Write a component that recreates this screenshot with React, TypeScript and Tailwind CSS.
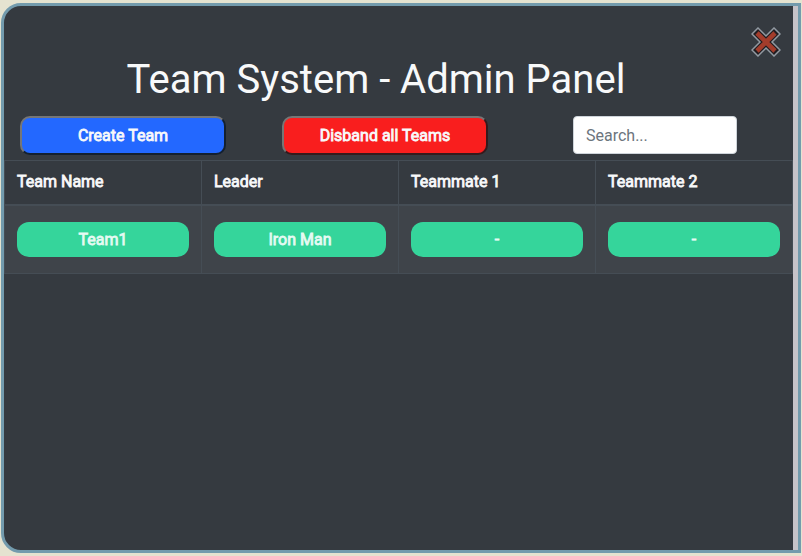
import React, { useState } from 'react';

interface Team {
  name: string;
  leader: string;
  members: string[];
}

const columns = ['Team Name', 'Leader', 'Teammate 1', 'Teammate 2'];

const initialTeams: Team[] = [{ name: 'Team1', leader: 'Iron Man', members: ['-', '-'] }];

// regular weight thickened with a stroke, keeps the widths of the regular face
const heavy = '[-webkit-text-stroke:0.8px_currentColor]';

const CloseIcon = () => (
  <svg viewBox="0 0 30 30" className="w-[30px] h-[30px]" aria-hidden="true">
    <path
      d="M7 1 L15 9 L23 1 L29 7 L21 15 L29 23 L23 29 L15 21 L7 29 L1 23 L9 15 L1 7 Z"
      fill="#211c20"
      stroke="#929aa2"
      strokeWidth="1.5"
    />
    <path d="M6 6 L24 24 M24 6 L6 24" stroke="#a33c2b" strokeWidth="4.6" />
  </svg>
);

interface CellProps {
  text: string;
}

const CellButton: React.FC<CellProps> = ({ text }) => (
  <button className={`block w-full h-[35px] pt-px rounded-xl bg-[#35d59b] text-[#e6faf3] text-center ${heavy}`}>{text}</button>
);

const App: React.FC = () => {
  const [teams, setTeams] = useState<Team[]>(initialTeams);
  const [search, setSearch] = useState('');

  const handleCreate = () => {
    setTeams([...teams, { name: `Team${teams.length + 1}`, leader: '-', members: ['-', '-'] }]);
  };

  const visible = teams.filter(team => team.name.toLowerCase().includes(search.toLowerCase()));

  return (
    <div className="min-h-screen flex bg-[#e5e3d0] px-px py-[3px] font-[Roboto,sans-serif] text-base text-[#f8f9fa]">
      <div className="flex flex-1 overflow-hidden rounded-l-[20px] border-3 border-[#739bad] bg-[#353a40]">
        <div className="flex-1 min-w-0">
          <header className="flex items-start pt-[21px] pr-3">
            <h1 className="flex-1 pt-[29px] pr-[3px] text-center text-[40px] leading-[48px]">Team System - Admin Panel</h1>
            <button aria-label="Close">
              <CloseIcon />
            </button>
          </header>

          <div className="grid grid-cols-3 pt-3 pb-[5px]">
            <div className="pl-4 pr-[41px]">
              <button
                onClick={handleCreate}
                className={`block w-full h-[39px] rounded-[10px] border-2 border-t-[#767676] border-l-[#767676] border-r-[#14202f] border-b-[#14202f] bg-[#2368ff] ${heavy}`}
              >
                Create Team
              </button>
            </div>
            <div className="pl-[15px] pr-[42px]">
              <button
                onClick={() => setTeams([])}
                className={`block w-full h-[39px] rounded-[10px] border-2 border-t-[#767676] border-l-[#767676] border-r-[#351a1c] border-b-[#351a1c] bg-[#f91e1e] ${heavy}`}
              >
                Disband all Teams
              </button>
            </div>
            <div className="pl-[43px] pr-14">
              <input
                type="text"
                aria-label="Search teams"
                placeholder="Search..."
                value={search}
                onChange={e => setSearch(e.target.value)}
                className="block w-full h-[38px] rounded border border-[#ced4da] bg-white px-3 text-[#495057] placeholder:text-[#6c757d]"
              />
            </div>
          </div>

          <table className="w-full table-fixed border-collapse text-left">
            <thead>
              <tr>
                {columns.map(column => (
                  <th
                    key={column}
                    className={`h-11 border border-b-2 border-[#454d55] px-3 py-0 font-normal ${heavy}`}
                  >
                    {column}
                  </th>
                ))}
              </tr>
            </thead>
            <tbody>
              {visible.map(team => (
                <tr key={team.name} className="bg-[#3f444a]">
                  {[team.name, team.leader, ...team.members].map((text, i) => (
                    <td key={i} className="border border-[#454d55] px-3 py-4">
                      <CellButton text={text} />
                    </td>
                  ))}
                </tr>
              ))}
            </tbody>
          </table>
        </div>
        <div className="w-[5px] bg-[#c6c3c9]" />
      </div>
    </div>
  );
};

export default App;
